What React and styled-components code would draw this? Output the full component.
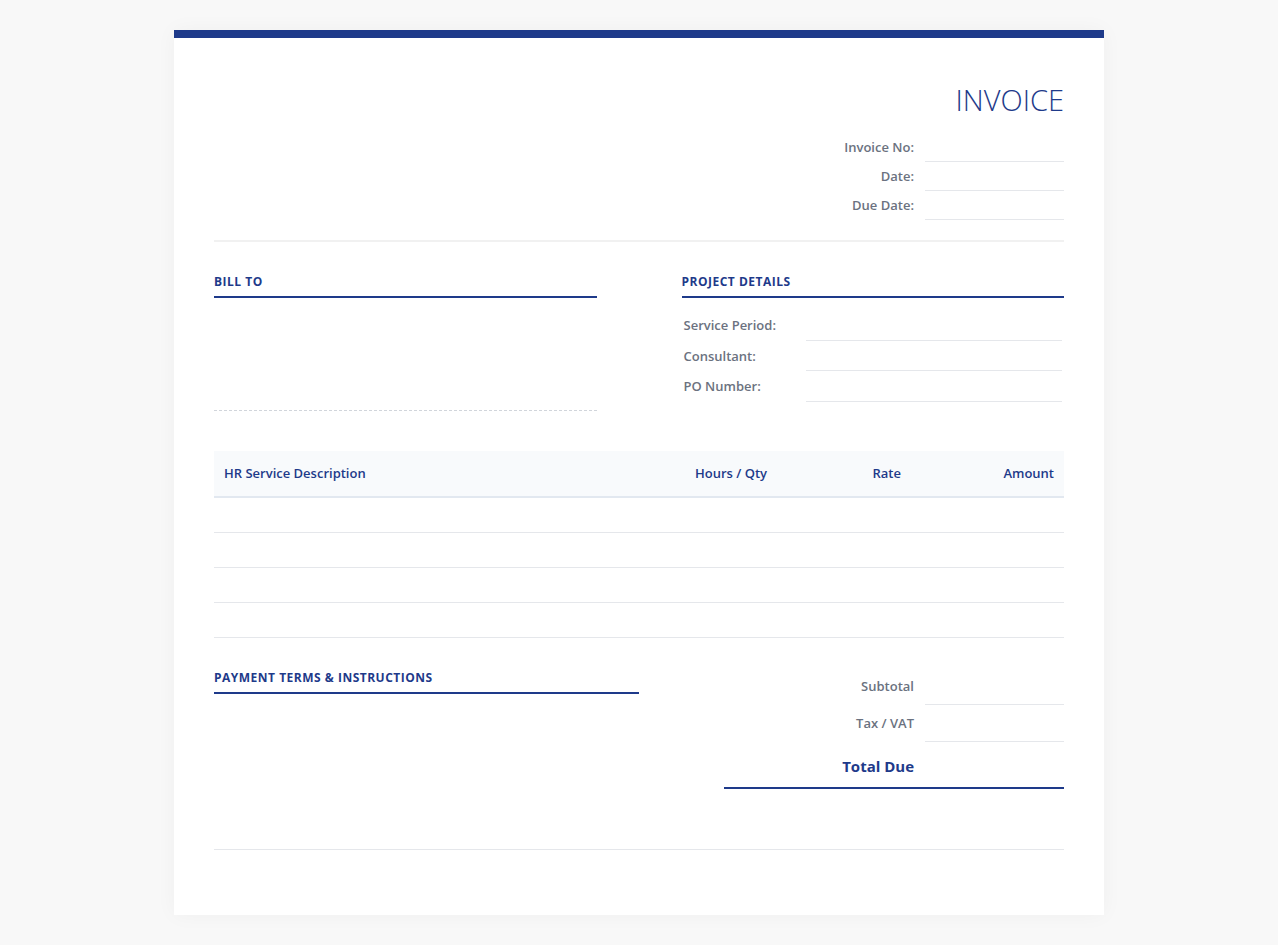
import React from 'react';
import styled, { createGlobalStyle } from 'styled-components';

const GlobalStyle = createGlobalStyle`
    * { box-sizing: border-box; }
    body {
        margin: 0;
        background-color: #f8f8f8;
        font-family: "Segoe UI", "Open Sans", "Liberation Sans", sans-serif;
        color: #374151;
    }
`;

const BLUE = '#1e3a8a';
const LINE = '#e5e7eb';

const Page = styled.div`
    padding: 30px 0 31px;
    display: flex;
    justify-content: center;
`;

const Sheet = styled.div`
    width: 930px;
    background-color: #fff;
    border-top: 8px solid ${BLUE};
    padding: 40px 40px 40px;
    box-shadow: 0 0 20px rgba(0, 0, 0, 0.04);
`;

const Header = styled.div`
    display: flex;
    justify-content: space-between;
    padding-bottom: 20px;
    border-bottom: 2px solid #f1f1f1;
`;

const Brand = styled.div`
    flex: 1;
`;

const HeaderRight = styled.div`
    display: flex;
    flex-direction: column;
    align-items: flex-end;
`;

const Title = styled.h1`
    margin: 2px 0 13px;
    font-size: 29px;
    font-weight: 300;
    line-height: 40px;
    letter-spacing: 0;
    color: ${BLUE};
`;

const MetaRow = styled.div`
    display: flex;
    align-items: stretch;
`;

const MetaLabel = styled.div`
    padding: 6px 11px 6px 0;
    font-size: 13px;
    line-height: 17px;
    font-weight: 600;
    color: #6b7280;
    text-align: right;
`;

const MetaValue = styled.div`
    width: 139px;
    border-bottom: 1px solid ${LINE};
`;

const TwoCol = styled.div`
    display: grid;
    grid-template-columns: 1fr 1fr;
    column-gap: 85px;
    margin-top: 30px;
`;

const SectionTitle = styled.h3`
    margin: 0;
    padding: 2px 0 6px;
    border-bottom: 2px solid ${BLUE};
    font-size: 12px;
    line-height: 16px;
    font-weight: 700;
    letter-spacing: 0.5px;
    text-transform: uppercase;
    color: ${BLUE};
`;

const AddressBox = styled.div`
    height: 113px;
    border-bottom: 1px dashed #d1d5db;
`;

const DetailList = styled.div`
    margin-top: 12px;
    padding: 0 2px;
`;

const DetailRow = styled.div`
    display: grid;
    grid-template-columns: 122px 1fr;
    height: 30.5px;
`;

const DetailLabel = styled.div`
    font-size: 13px;
    line-height: 30px;
    font-weight: 600;
    color: #6b7280;
`;

const DetailValue = styled.div`
    border-bottom: 1px solid ${LINE};
`;

const Table = styled.table`
    width: 100%;
    margin-top: 40px;
    border-collapse: collapse;
    table-layout: fixed;
`;

const Th = styled.th`
    width: ${({ w }) => w}px;
    padding: 14px 10px;
    font-size: 13px;
    line-height: 17px;
    font-weight: 600;
    color: ${BLUE};
    text-align: ${({ align }) => align || 'left'};
    background-color: #f8fafc;
    border-bottom: 2px solid #e2e8f0;
`;

const Td = styled.td`
    height: 35px;
    padding: 0 10px;
    border-bottom: 1px solid ${LINE};
`;

const Footer = styled.div`
    display: flex;
    justify-content: space-between;
    margin-top: 30px;
`;

const Terms = styled.div`
    width: 50%;
`;

const Totals = styled.div`
    width: 40%;
`;

const TotalRow = styled.div`
    display: flex;
    border-bottom: ${({ grand }) => (grand ? `2px solid ${BLUE}` : 'none')};
`;

const TotalLabel = styled.div`
    flex: 1;
    padding: ${({ grand }) => (grand ? '14px 11px 11px 0' : '10px 11px 10px 0')};
    font-size: ${({ grand }) => (grand ? '15px' : '13px')};
    line-height: ${({ grand }) => (grand ? '20px' : '17px')};
    font-weight: ${({ grand }) => (grand ? 700 : 600)};
    color: ${({ grand }) => (grand ? BLUE : '#6b7280')};
    text-align: right;
`;

const TotalValue = styled.div`
    width: 139px;
    border-bottom: ${({ grand }) => (grand ? 'none' : `1px solid ${LINE}`)};
`;

const FootNote = styled.div`
    margin-top: 60px;
    padding-top: 25px;
    border-top: 1px solid ${LINE};
`;

const meta = ['Invoice No:', 'Date:', 'Due Date:'];
const details = ['Service Period:', 'Consultant:', 'PO Number:'];
const columns = [
    { label: 'HR Service Description', w: 435, align: 'left' },
    { label: 'Hours / Qty', w: 128, align: 'right' },
    { label: 'Rate', w: 134, align: 'right' },
    { label: 'Amount', w: 153, align: 'right' },
];

const App = () => (
    <>
        <GlobalStyle />
        <Page>
            <Sheet>
                <Header>
                    <Brand />
                    <HeaderRight>
                        <Title>INVOICE</Title>
                        {meta.map((m) => (
                            <MetaRow key={m}>
                                <MetaLabel>{m}</MetaLabel>
                                <MetaValue />
                            </MetaRow>
                        ))}
                    </HeaderRight>
                </Header>

                <TwoCol>
                    <div>
                        <SectionTitle>Bill To</SectionTitle>
                        <AddressBox />
                    </div>
                    <div>
                        <SectionTitle>Project Details</SectionTitle>
                        <DetailList>
                            {details.map((d) => (
                                <DetailRow key={d}>
                                    <DetailLabel>{d}</DetailLabel>
                                    <DetailValue />
                                </DetailRow>
                            ))}
                        </DetailList>
                    </div>
                </TwoCol>

                <Table>
                    <thead>
                        <tr>
                            {columns.map((c) => (
                                <Th key={c.label} w={c.w} align={c.align}>{c.label}</Th>
                            ))}
                        </tr>
                    </thead>
                    <tbody>
                        {[0, 1, 2, 3].map((r) => (
                            <tr key={r}>
                                {columns.map((c) => <Td key={c.label} />)}
                            </tr>
                        ))}
                    </tbody>
                </Table>

                <Footer>
                    <Terms>
                        <SectionTitle>Payment Terms &amp; Instructions</SectionTitle>
                    </Terms>
                    <Totals>
                        <TotalRow>
                            <TotalLabel>Subtotal</TotalLabel>
                            <TotalValue />
                        </TotalRow>
                        <TotalRow>
                            <TotalLabel>Tax / VAT</TotalLabel>
                            <TotalValue />
                        </TotalRow>
                        <TotalRow grand>
                            <TotalLabel grand>Total Due</TotalLabel>
                            <TotalValue grand />
                        </TotalRow>
                    </Totals>
                </Footer>

                <FootNote />
            </Sheet>
        </Page>
    </>
);

export default App;
